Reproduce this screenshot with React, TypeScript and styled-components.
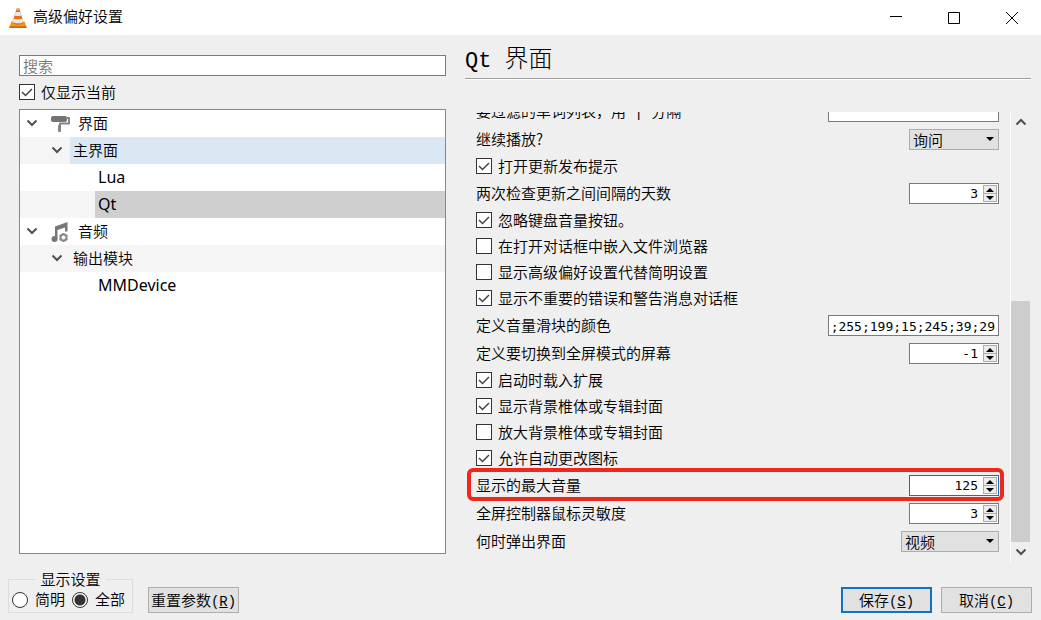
import React from "react";
import styled, { createGlobalStyle, css } from "styled-components";

const GlobalStyle = createGlobalStyle`
  *, *::before, *::after { box-sizing: border-box; }
  body {
    margin: 0;
    background: #efefef;
    color: #000;
    font-family: "Noto Sans CJK SC", sans-serif;
    font-size: 15px;
    font-weight: 350;
    line-height: 19px;
  }
  button, input, select { font: inherit; color: inherit; }
`;

const Window = styled.div`
  display: flex;
  flex-direction: column;
  height: 100vh;
  min-height: 400px;
`;

const TitleBar = styled.header`
  display: flex;
  align-items: center;
  flex: none;
  height: 35px;
  padding-left: 8px;
  background: #fff;
`;

const WindowTitle = styled.h1`
  flex: 1;
  margin: 0 0 4px 5px;
  font-size: 15px;
  font-weight: 350;
`;

const CaptionButton = styled.button`
  display: grid;
  place-items: center;
  width: 58px;
  height: 32px;
  padding: 0;
  border: 0;
  background: none;
`;

const Body = styled.main`
  display: grid;
  grid-template-columns: minmax(0, 427fr) minmax(0, 566fr);
  column-gap: 19px;
  flex: 1;
  min-height: 0;
  padding: 0 10px 0 19px;
`;

const Sidebar = styled.section`
  display: flex;
  flex-direction: column;
  gap: 6px;
  min-height: 0;
  padding: 20px 0 8px;
`;

const SearchInput = styled.input`
  flex: none;
  height: 21px;
  padding: 0 3px;
  border: 1px solid #7a7a7a;
  border-radius: 0;
  background: #fff;
  line-height: 19px;
  &::placeholder { color: #757575; opacity: 1; }
`;

const CheckLabel = styled.label`
  display: flex;
  align-items: center;
  gap: 6px;
  flex: none;
  height: 19px;
  padding-bottom: 1px;
  white-space: nowrap;
`;

const SidebarCheck = styled(CheckLabel)`
  height: 21px;
`;

const CheckText = styled.span`
  padding-bottom: 2px;
`;

const BoxWrap = styled.span`
  position: relative;
  display: block;
  flex: none;
  width: 16px;
  height: 16px;
`;

const BoxInput = styled.input`
  appearance: none;
  display: block;
  width: 16px;
  height: 16px;
  margin: 0;
  border: 1px solid #333;
  background: #fff;
  & + svg { display: none; }
  &:checked + svg { display: block; }
`;

const BoxTick = styled.svg`
  position: absolute;
  inset: 0;
  pointer-events: none;
`;

const Tree = styled.ul`
  flex: 1;
  min-height: 0;
  margin: 0;
  padding: 0;
  overflow: hidden;
  list-style: none;
  border: 1px solid #828790;
  background: #fff;
`;

const TreeRow = styled.li<{ $depth: number; $striped?: boolean }>`
  display: flex;
  height: 27px;
  padding-left: ${(p) => p.$depth * 25}px;
  background: ${(p) => (p.$striped ? "#f5f5f5" : "#fff")};
`;

const Expander = styled.button`
  display: grid;
  place-items: center;
  width: 25px;
  padding: 0 2px 2px 0;
  border: 0;
  background: none;
`;

const TreeItem = styled.span<{ $state?: "hover" | "selected"; $leaf?: boolean }>`
  display: flex;
  align-items: center;
  gap: 7px;
  flex: 1;
  padding: 0 0 2px 3px;
  background: ${(p) =>
    p.$state === "hover" ? "#dae8f4" : p.$state === "selected" ? "#cfcfcf" : "transparent"};
  ${(p) =>
    p.$leaf &&
    css`
      padding-bottom: 0;
      font-family: "Noto Sans", sans-serif;
      font-size: 16px;
      font-weight: 400;
    `}
`;

const Panel = styled.section`
  display: flex;
  flex-direction: column;
  min-height: 0;
`;

const PanelTitle = styled.h2`
  flex: none;
  height: 44px;
  margin: 0 0 33px;
  padding-top: 6px;
  border-bottom: 1px solid #a0a0a0;
  box-shadow: 0 1px 0 #fff;
  font-size: 24px;
  font-weight: 300;
  line-height: 32px;
`;

const TitleLatin = styled.span`
  font-family: "Liberation Mono", monospace;
  font-size: 22px;
  font-weight: 400;
  white-space: pre;
`;

const ScrollArea = styled.div`
  display: flex;
  flex: 1;
  min-height: 0;
`;

const Options = styled.div`
  display: flex;
  flex-direction: column;
  justify-content: flex-end;
  gap: 7px;
  flex: 1;
  min-width: 0;
  overflow: hidden;
  padding: 0 11px 10px;
`;

const FieldRow = styled.div<{ $marked?: boolean }>`
  position: relative;
  display: flex;
  justify-content: space-between;
  flex: none;
  height: 21px;
  ${(p) =>
    p.$marked &&
    css`
      &::after {
        content: "";
        position: absolute;
        inset: -7px -5px -5px -9px;
        border: 4px solid #f0281c;
        border-radius: 6px;
        pointer-events: none;
      }
    `}
`;

const FieldLabel = styled.label`
  white-space: pre;
`;

const TextField = styled.input`
  width: 171px;
  height: 21px;
  padding: 1px 3px 0 0;
  border: 1px solid #7a7a7a;
  background: #fff;
  font-family: "DejaVu Sans Mono", monospace;
  font-size: 13px;
  font-weight: 400;
  text-align: right;
`;

const SpinFrame = styled.div<{ $focused?: boolean }>`
  display: flex;
  width: 90px;
  height: 21px;
  padding: 1px;
  border: 1px solid ${(p) => (p.$focused ? "#1073c0" : "#7a7a7a")};
  background: #fff;
`;

const SpinInput = styled.input`
  appearance: textfield;
  flex: 1;
  min-width: 0;
  padding: 0 5px 0 0;
  border: 0;
  outline: 0;
  background: none;
  font-family: "DejaVu Sans Mono", monospace;
  font-size: 13px;
  font-weight: 400;
  text-align: right;
  &::-webkit-inner-spin-button { appearance: none; margin: 0; }
`;

const SpinButtons = styled.div`
  display: grid;
  grid-template-rows: 7px 7px;
  row-gap: 1px;
  width: 14px;
  height: 17px;
  border: 1px solid #adadad;
  background: #adadad;
`;

const SpinButton = styled.button`
  display: flex;
  align-items: center;
  justify-content: center;
  padding: 0;
  border: 0;
  background: #ececec;
`;

const SelectFrame = styled.div<{ $width: number }>`
  position: relative;
  width: ${(p) => p.$width}px;
`;

const Select = styled.select`
  appearance: none;
  display: block;
  width: 100%;
  height: 21px;
  padding: 0 20px 0 3px;
  border: 1px solid #adadad;
  border-radius: 0;
  background: #e1e1e1;
  line-height: 19px;
`;

const SelectArrow = styled.svg`
  position: absolute;
  top: 8px;
  right: 5px;
  pointer-events: none;
`;

const ScrollBar = styled.div`
  display: flex;
  flex-direction: column;
  flex: none;
  width: 21px;
  border-left: 1px solid #fff;
  padding-right: 1px;
`;

const ScrollButton = styled.button`
  display: grid;
  place-items: center;
  height: 20px;
  padding: 0;
  border: 0;
  background: none;
`;

const ScrollTrack = styled.div`
  display: grid;
  grid-template-rows: 169fr 241fr;
  flex: 1;
`;

const ScrollThumb = styled.div`
  grid-row: 2;
  background: #cdcdcd;
`;

const Footer = styled.footer`
  display: flex;
  align-items: flex-end;
  flex: none;
  height: 58px;
  padding: 0 9px 7px 8px;
`;

const ModeGroup = styled.fieldset`
  display: flex;
  gap: 7px;
  width: 125px;
  margin: 0 15px 0 0;
  padding: 1px 3px 2px;
  border: 1px solid #dcdcdc;
`;

const ModeLegend = styled.legend`
  height: 18px;
  margin: 0 auto;
  padding: 0 5px;
  line-height: 17px;
`;

const RadioLabel = styled.label`
  display: flex;
  align-items: center;
  gap: 7px;
  height: 21px;
  white-space: nowrap;
`;

const Radio = styled.input`
  appearance: none;
  flex: none;
  width: 16px;
  height: 16px;
  margin: 0;
  border: 1px solid #333;
  border-radius: 50%;
  background: #fff;
  &:checked { background: radial-gradient(circle, #333 5px, #fff 6px); }
`;

const PushButton = styled.button<{ $primary?: boolean }>`
  width: 91px;
  height: 26px;
  padding: 1px 0 0;
  border: ${(p) => (p.$primary ? "2px solid #1073c0" : "1px solid #adadad")};
  background: #e1e1e1;
  line-height: 20px;
  white-space: nowrap;
`;

const Actions = styled.div`
  display: flex;
  gap: 9px;
  margin-left: auto;
`;

const Mnemonic = styled.span`
  font-family: "Liberation Mono", monospace;
  font-size: 14px;
  font-weight: 400;
`;

function Cone() {
  return (
    <svg width="20" height="22" viewBox="0 0 20 22" aria-hidden="true">
      <path d="M3.4 14.5h13.2l1.9 5.3c.3.8 0 1.2-.8 1.2H2.3c-.8 0-1.1-.4-.8-1.2z" fill="#f39a1c" />
      <path d="M1.6 19.3h16.8l.2 1c0 .5-.3.7-.9.7H2.3c-.6 0-.9-.2-.9-.7z" fill="#d9610b" />
      <path d="M8.5 2c.2-.8.7-1 1.5-1s1.3.2 1.5 1l4 13.3c-.7 1.8-3 2.4-5.5 2.4s-4.8-.6-5.5-2.4z" fill="#e2701c" />
      <path d="M7.6 5h4.8l1 3.4c-1 .8-5.8.8-6.8 0zM5.7 11.4c1.800 1.200 6.800 1.200 8.600 0l1.100 3.500c-1.800 1.800-9 1.800-10.800 0z" fill="#e9e5df" />
      <path d="M8.5 2c.2-.8.7-1 1.5-1s1.3.2 1.5 1l.3 1c-1 .5-2.600.5-3.600 0z" fill="#c9b5a6" />
    </svg>
  );
}

function RollerIcon() {
  return (
    <svg width="20" height="18" viewBox="0 0 20 18" fill="none" aria-hidden="true">
      <rect x="0" y="1" width="16" height="6" rx="2" fill="#747474" />
      <path d="M15 3h3v5.500H9V12" stroke="#858585" strokeWidth="2" strokeLinejoin="round" />
      <rect x="7" y="10" width="3" height="7" rx="1" fill="#858585" />
    </svg>
  );
}

function MusicIcon() {
  return (
    <svg width="20" height="22" viewBox="0 0 20 22" fill="none" aria-hidden="true">
      <path d="M4 5.500 16.500 1v9.500h-2.500V6.500L6.500 9v9H4z" fill="#777" />
      <circle cx="3.500" cy="18" r="3" fill="#777" />
      <circle cx="12.500" cy="16.500" r="3" stroke="#888" strokeWidth="2" />
      <path
        d="M12.500 12v1.500M12.500 19.500V21M8.600 14.200l1.300.8M15.100 18l1.300.8M8.600 18.800l1.300-.8M15.100 15l1.300-.8"
        stroke="#888"
        strokeWidth="2"
      />
    </svg>
  );
}

function Chevron({ up }: { up?: boolean }) {
  return (
    <svg width="12" height="8" viewBox="0 0 12 8" fill="none" aria-hidden="true">
      <path d={up ? "M1.500 6.500 6 2l4.500 4.500" : "M1.500 1.500 6 6l4.500-4.500"} stroke="#505050" strokeWidth="2" />
    </svg>
  );
}

function Triangle({ up }: { up?: boolean }) {
  return (
    <svg width="8" height="4" viewBox="0 0 8 4" aria-hidden="true">
      <path d={up ? "M0 4 4 0l4 4z" : "M0 0h8L4 4z"} fill="#000" />
    </svg>
  );
}

function CheckBox({ checked }: { checked?: boolean }) {
  return (
    <BoxWrap>
      <BoxInput type="checkbox" defaultChecked={checked} />
      <BoxTick width="16" height="16" viewBox="0 0 16 16" fill="none" aria-hidden="true">
        <path d="M3 8l3.500 3.500L13 5" stroke="#444" strokeWidth="1.500" />
      </BoxTick>
    </BoxWrap>
  );
}

function CheckOption({ text, checked }: { text: string; checked?: boolean }) {
  return (
    <CheckLabel>
      <CheckBox checked={checked} />
      <CheckText>{text}</CheckText>
    </CheckLabel>
  );
}

function SpinOption({ id, text, value, focused }: { id: string; text: string; value: number; focused?: boolean }) {
  return (
    <FieldRow $marked={focused}>
      <FieldLabel htmlFor={id}>{text}</FieldLabel>
      <SpinFrame $focused={focused}>
        <SpinInput id={id} type="number" defaultValue={value} />
        <SpinButtons>
          <SpinButton type="button" aria-label="增加"><Triangle up /></SpinButton>
          <SpinButton type="button" aria-label="减少"><Triangle /></SpinButton>
        </SpinButtons>
      </SpinFrame>
    </FieldRow>
  );
}

function SelectOption({ id, text, value, width }: { id: string; text: string; value: string; width: number }) {
  return (
    <FieldRow>
      <FieldLabel htmlFor={id}>{text}</FieldLabel>
      <SelectFrame $width={width}>
        <Select id={id} defaultValue={value}>
          <option>{value}</option>
        </Select>
        <SelectArrow width="8" height="4" viewBox="0 0 8 4" aria-hidden="true">
          <path d="M0 0h8L4 4z" fill="#000" />
        </SelectArrow>
      </SelectFrame>
    </FieldRow>
  );
}

function TextOption({ id, text, value }: { id: string; text: React.ReactNode; value: string }) {
  return (
    <FieldRow>
      <FieldLabel htmlFor={id}>{text}</FieldLabel>
      <TextField id={id} type="text" defaultValue={value} />
    </FieldRow>
  );
}

type Node = {
  text: string;
  depth: number;
  open?: boolean;
  striped?: boolean;
  state?: "hover" | "selected";
  icon?: React.ReactNode;
};

const nodes: Node[] = [
  { text: "界面", depth: 0, open: true, icon: <RollerIcon /> },
  { text: "主界面", depth: 1, open: true, striped: true, state: "hover" },
  { text: "Lua", depth: 2 },
  { text: "Qt", depth: 2, striped: true, state: "selected" },
  { text: "音频", depth: 0, open: true, icon: <MusicIcon /> },
  { text: "输出模块", depth: 1, open: true, striped: true },
  { text: "MMDevice", depth: 2 },
];

const IconSlot = styled.span`
  display: grid;
  place-items: center;
  margin-left: 3px;
  padding-top: 2px;
`;

const LeafSpace = styled.span`
  width: 25px;
`;

export default function App() {
  return (
    <Window lang="zh-CN">
      <GlobalStyle />
      <TitleBar>
        <Cone />
        <WindowTitle>高级偏好设置</WindowTitle>
        <CaptionButton aria-label="最小化">
          <svg width="12" height="12"><path d="M0 4.500h12" stroke="#000" /></svg>
        </CaptionButton>
        <CaptionButton aria-label="最大化">
          <svg width="12" height="12"><path d="M.5.500h11v11H.5z" stroke="#000" fill="none" /></svg>
        </CaptionButton>
        <CaptionButton aria-label="关闭">
          <svg width="12" height="12"><path d="M0 0l12 12M12 0 0 12" stroke="#000" /></svg>
        </CaptionButton>
      </TitleBar>

      <Body>
        <Sidebar>
          <SearchInput type="text" placeholder="搜索" aria-label="搜索" />
          <SidebarCheck>
            <CheckBox checked />
            <CheckText>仅显示当前</CheckText>
          </SidebarCheck>
          <Tree>
            {nodes.map((n) => (
              <TreeRow key={n.text} $depth={n.depth} $striped={n.striped}>
                {n.open ? (
                  <Expander type="button" aria-label="折叠"><Chevron /></Expander>
                ) : (
                  <LeafSpace />
                )}
                <TreeItem $state={n.state} $leaf={!n.open}>
                  {n.icon && <IconSlot>{n.icon}</IconSlot>}
                  {n.text}
                </TreeItem>
              </TreeRow>
            ))}
          </Tree>
        </Sidebar>

        <Panel>
          <PanelTitle><TitleLatin>Qt </TitleLatin>界面</PanelTitle>
          <ScrollArea>
            <Options>
              <TextOption id="filter" text={<>要过滤的单词列表，用<Mnemonic> | </Mnemonic>分隔</>} value="" />
              <SelectOption id="resume" text="继续播放?" value="询问" width={90} />
              <CheckOption text="打开更新发布提示" checked />
              <SpinOption id="days" text="两次检查更新之间间隔的天数" value={3} />
              <CheckOption text="忽略键盘音量按钮。" checked />
              <CheckOption text="在打开对话框中嵌入文件浏览器" />
              <CheckOption text="显示高级偏好设置代替简明设置" />
              <CheckOption text="显示不重要的错误和警告消息对话框" checked />
              <TextOption id="colors" text="定义音量滑块的颜色" value=";255;199;15;245;39;29" />
              <SpinOption id="screen" text="定义要切换到全屏模式的屏幕" value={-1} />
              <CheckOption text="启动时载入扩展" checked />
              <CheckOption text="显示背景椎体或专辑封面" checked />
              <CheckOption text="放大背景椎体或专辑封面" />
              <CheckOption text="允许自动更改图标" checked />
              <SpinOption id="volume" text="显示的最大音量" value={125} focused />
              <SpinOption id="mouse" text="全屏控制器鼠标灵敏度" value={3} />
              <SelectOption id="raise" text="何时弹出界面" value="视频" width={98} />
            </Options>
            <ScrollBar>
              <ScrollButton type="button" aria-label="向上滚动"><Chevron up /></ScrollButton>
              <ScrollTrack><ScrollThumb /></ScrollTrack>
              <ScrollButton type="button" aria-label="向下滚动"><Chevron /></ScrollButton>
            </ScrollBar>
          </ScrollArea>
        </Panel>
      </Body>

      <Footer>
        <ModeGroup>
          <ModeLegend>显示设置</ModeLegend>
          <RadioLabel><Radio type="radio" name="mode" /><CheckText>简明</CheckText></RadioLabel>
          <RadioLabel><Radio type="radio" name="mode" defaultChecked /><CheckText>全部</CheckText></RadioLabel>
        </ModeGroup>
        <PushButton type="button">重置参数<Mnemonic>(<u>R</u>)</Mnemonic></PushButton>
        <Actions>
          <PushButton type="button" $primary>保存<Mnemonic>(<u>S</u>)</Mnemonic></PushButton>
          <PushButton type="button">取消<Mnemonic>(<u>C</u>)</Mnemonic></PushButton>
        </Actions>
      </Footer>
    </Window>
  );
}
